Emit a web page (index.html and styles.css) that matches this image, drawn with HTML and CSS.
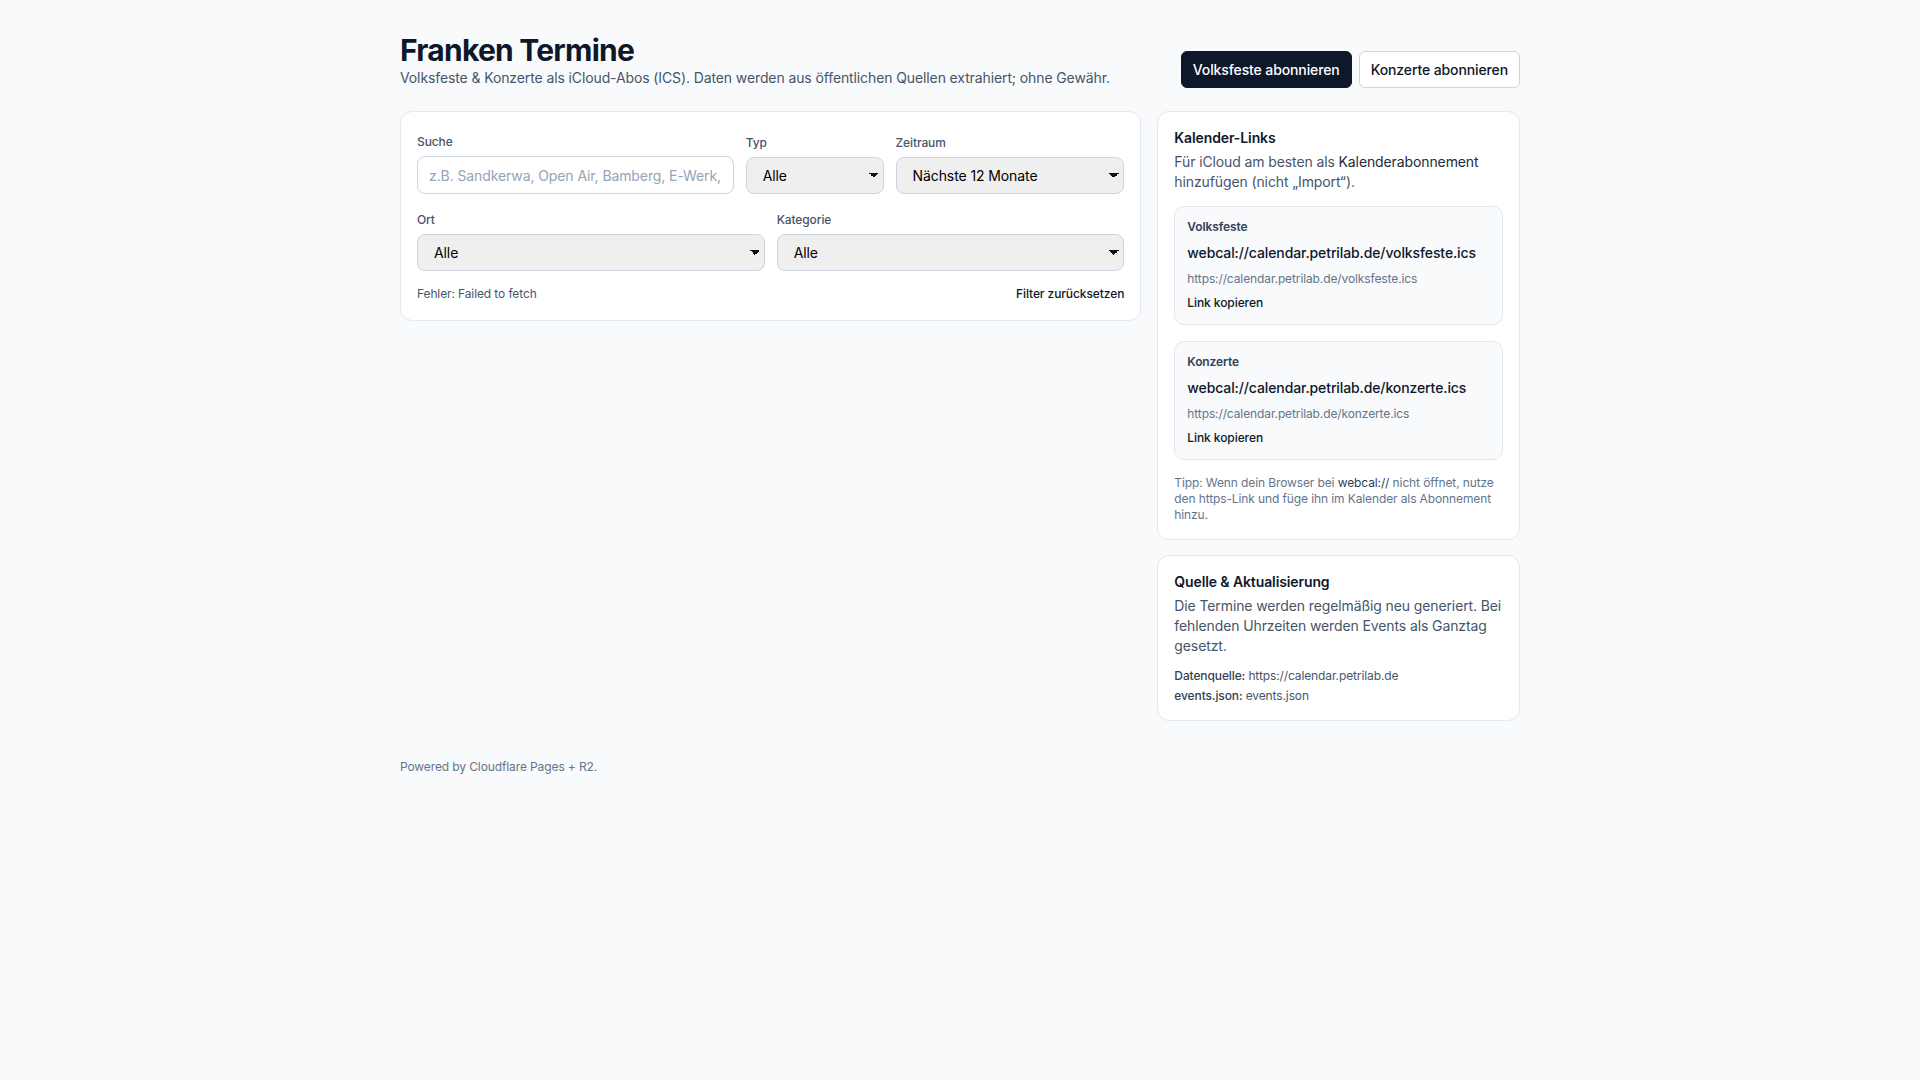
FILE: index.html
```html
<!DOCTYPE html>
<html lang="de">
<head>
<meta charset="utf-8">
<title>Franken Termine</title>
<link rel="stylesheet" href="styles.css">
</head>
<body>
<div class="page">
  <header class="header">
    <div>
      <h1 class="title">Franken Termine</h1>
      <p class="subtitle">Volksfeste &amp; Konzerte als iCloud-Abos (ICS). Daten werden aus öffentlichen Quellen extrahiert; ohne Gewähr.</p>
    </div>
    <div class="actions">
      <a class="btn btn-dark" href="#">Volksfeste abonnieren</a>
      <a class="btn btn-light" href="#">Konzerte abonnieren</a>
    </div>
  </header>

  <main class="grid">
    <section class="card filters">
      <div class="row1">
        <div class="field">
          <label class="label">Suche</label>
          <input class="input" type="text" placeholder="z.B. Sandkerwa, Open Air, Bamberg, E-Werk, …">
        </div>
        <div class="field">
          <label class="label">Typ</label>
          <select class="select"><option>Alle</option></select>
        </div>
        <div class="field">
          <label class="label">Zeitraum</label>
          <select class="select"><option>Nächste 12 Monate</option></select>
        </div>
      </div>
      <div class="row2">
        <div class="field">
          <label class="label">Ort</label>
          <select class="select"><option>Alle</option></select>
        </div>
        <div class="field">
          <label class="label">Kategorie</label>
          <select class="select"><option>Alle</option></select>
        </div>
      </div>
      <div class="status">
        <span class="error">Fehler: Failed to fetch</span>
        <button class="reset" type="button">Filter zurücksetzen</button>
      </div>
    </section>

    <aside class="side">
      <section class="card">
        <h2 class="card-title">Kalender-Links</h2>
        <p class="desc">Für iCloud am besten als <span class="em">Kalenderabonnement</span> hinzufügen (nicht „Import“).</p>

        <div class="linkbox">
          <div class="lb-title">Volksfeste</div>
          <div class="lb-url">webcal://calendar.petrilab.de/volksfeste.ics</div>
          <div class="lb-https">https://calendar.petrilab.de/volksfeste.ics</div>
          <button class="lb-copy" type="button">Link kopieren</button>
        </div>

        <div class="linkbox">
          <div class="lb-title">Konzerte</div>
          <div class="lb-url">webcal://calendar.petrilab.de/konzerte.ics</div>
          <div class="lb-https">https://calendar.petrilab.de/konzerte.ics</div>
          <button class="lb-copy" type="button">Link kopieren</button>
        </div>

        <p class="tip">Tipp: Wenn dein Browser bei <span class="em">webcal://</span> nicht öffnet, nutze den https-Link und füge ihn im Kalender als Abonnement hinzu.</p>
      </section>

      <section class="card">
        <h2 class="card-title">Quelle &amp; Aktualisierung</h2>
        <p class="desc">Die Termine werden regelmäßig neu generiert. Bei fehlenden Uhrzeiten werden Events als Ganztag gesetzt.</p>
        <p class="meta first"><b>Datenquelle:</b> https://calendar.petrilab.de</p>
        <p class="meta"><b>events.json:</b> events.json</p>
      </section>
    </aside>
  </main>

  <footer class="footer">Powered by Cloudflare Pages + R2.</footer>
</div>
</body>
</html>
```

FILE: styles.css
```css
* {
  box-sizing: border-box;
}

html, body {
  margin: 0;
  padding: 0;
}

body {
  background: #f8fafc;
  font-family: Inter, "Noto Sans", "Liberation Sans", sans-serif;
  letter-spacing: -0.007em;
  color: #0f172a;
}

.page {
  max-width: 1120px;
  margin: 0 auto;
  padding: 32px 0;
}

.header {
  display: flex;
  justify-content: space-between;
  align-items: flex-end;
}

.title {
  margin: 0;
  font-size: 30px;
  line-height: 36px;
  font-weight: 700;
  letter-spacing: -0.025em;
  color: #0f172a;
}

.subtitle {
  margin: 0;
  font-size: 14px;
  line-height: 20px;
  color: #475569;
}

.actions {
  display: flex;
  gap: 7px;
}

.btn {
  display: inline-block;
  padding: 8px 11px;
  font-size: 14px;
  line-height: 19px;
  font-weight: 500;
  border-radius: 6px;
  text-decoration: none;
  border: 1px solid transparent;
}

.btn-dark {
  background: #0f172a;
  border-color: #0f172a;
  color: #ffffff;
}

.btn-light {
  background: #ffffff;
  border-color: #cbd5e1;
  color: #0f172a;
}

.grid {
  margin-top: 23px;
  display: grid;
  grid-template-columns: repeat(3, 1fr);
  gap: 16px;
  align-items: start;
}

.card {
  background: #ffffff;
  border: 1px solid #e2e8f0;
  border-radius: 12px;
  padding: 16px;
}

.filters {
  grid-column: span 2;
  padding-top: 20px;
}

.row1 {
  display: grid;
  grid-template-columns: 317fr 138fr 229fr;
  gap: 12px;
  align-items: end;
}

.row2 {
  display: grid;
  grid-template-columns: 1fr 1fr;
  gap: 12px;
  margin-top: 16px;
}

.label {
  display: block;
  font-size: 12px;
  line-height: 20px;
  font-weight: 500;
  color: #475569;
  margin-bottom: 4px;
}

.input {
  display: block;
  width: 100%;
  height: 38px;
  padding: 8px 11px;
  font-family: inherit;
  font-size: 14px;
  line-height: 20px;
  letter-spacing: -0.007em;
  color: #0f172a;
  background: #ffffff;
  border: 1px solid #cbd5e1;
  border-radius: 8px;
  outline: none;
}

.input::placeholder {
  color: #94a3b8;
}

.select {
  display: block;
  width: 100%;
  height: 37px;
  padding: 0 24px 0 16px;
  font-family: inherit;
  font-size: 14px;
  letter-spacing: -0.007em;
  color: #000000;
  -webkit-appearance: none;
  appearance: none;
  border: 1px solid #cbd5e1;
  border-radius: 8px;
  background-color: #efefef;
  background-image:
    linear-gradient(45deg, transparent 50%, #111111 50%),
    linear-gradient(135deg, #111111 50%, transparent 50%);
  background-size: 5px 5px, 5px 5px;
  background-position: calc(100% - 9px) 50%, calc(100% - 4px) 50%;
  background-repeat: no-repeat;
  outline: none;
}

.status {
  margin-top: 13px;
  display: flex;
  justify-content: space-between;
  align-items: center;
  font-size: 12px;
  line-height: 20px;
}

.error {
  color: #475569;
}

.reset {
  background: none;
  border: 0;
  padding: 0;
  font-family: inherit;
  font-size: 12px;
  line-height: 20px;
  letter-spacing: -0.007em;
  font-weight: 500;
  color: #0f172a;
  cursor: pointer;
}

.side {
  display: flex;
  flex-direction: column;
  gap: 15px;
}

.card-title {
  margin: 0;
  font-size: 14px;
  line-height: 20px;
  font-weight: 600;
  color: #0f172a;
}

.desc {
  margin: 4px 0 0;
  font-size: 14px;
  line-height: 20px;
  color: #475569;
}

.desc .em {
  color: #1e293b;
}

.linkbox {
  margin-top: 16px;
  display: flex;
  flex-direction: column;
  align-items: flex-start;
  gap: 8px;
  padding: 12px 12px 13px;
  background: #f8fafc;
  border: 1px solid #e2e8f0;
  border-radius: 10px;
}

.desc + .linkbox {
  margin-top: 14px;
}

.lb-title {
  font-size: 12px;
  line-height: 16px;
  font-weight: 600;
  color: #334155;
}

.lb-url {
  font-size: 14px;
  line-height: 20px;
  font-weight: 500;
  color: #0f172a;
}

.lb-https {
  font-size: 12px;
  line-height: 16px;
  color: #64748b;
}

.lb-copy {
  background: none;
  border: 0;
  padding: 0;
  font-family: inherit;
  font-size: 12px;
  line-height: 16px;
  letter-spacing: -0.007em;
  font-weight: 500;
  color: #0f172a;
  cursor: pointer;
}

.tip {
  margin: 15px 0 0;
  font-size: 12px;
  line-height: 16px;
  color: #64748b;
}

.tip .em {
  color: #334155;
}

.meta {
  margin: 4px 0 0;
  font-size: 12px;
  line-height: 16px;
  color: #475569;
}

.meta.first {
  margin-top: 12px;
}

.meta b {
  font-weight: 500;
  color: #334155;
}

.footer {
  margin-top: 38px;
  font-size: 12px;
  line-height: 16px;
  color: #64748b;
}
```
